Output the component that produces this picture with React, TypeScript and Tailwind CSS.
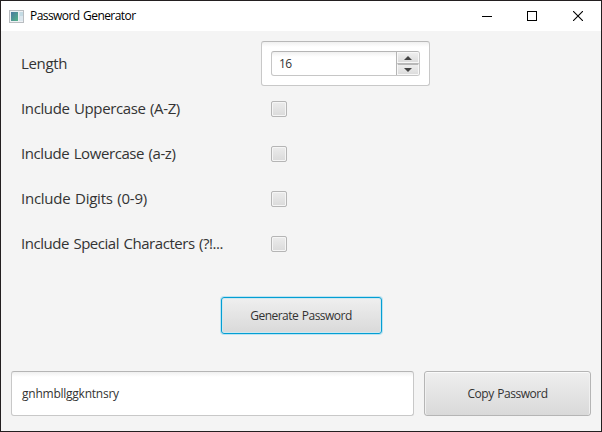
import React from "react";

const options = [
  { label: "Include Uppercase (A-Z)", tracking: "tracking-[-0.38px]" },
  { label: "Include Lowercase (a-z)", tracking: "tracking-[-0.42px]" },
  { label: "Include Digits (0-9)", tracking: "tracking-[-0.25px]" },
  { label: "Include Special Characters (?!...", tracking: "tracking-[-0.46px]" },
];

function TitleBar() {
  return (
    <header className="flex h-[30px] shrink-0 items-center bg-white text-black">
      <svg className="ml-2 h-[13px] w-[15px]" viewBox="0 0 15 13" shapeRendering="crispEdges">
        <defs>
          <linearGradient id="pane" x1="0" y1="0" x2="1" y2="1">
            <stop offset="0" stopColor="#4a78a0" />
            <stop offset="1" stopColor="#55b387" />
          </linearGradient>
        </defs>
        <rect width="15" height="13" fill="#b9bdc1" />
        <rect x="1" y="1" width="13" height="11" fill="#eef1f4" />
        <rect x="2" y="2" width="7" height="9" fill="url(#pane)" />
        <rect x="10" y="2" width="1" height="9" fill="#dbe3ea" />
        <rect x="11" y="2" width="3" height="4" fill="#c4dbe4" />
        <rect x="11" y="6" width="3" height="5" fill="#dce7ee" />
      </svg>
      <h1 className="ml-[6px] whitespace-nowrap text-[12px] leading-[16px] tracking-[-0.57px] [word-spacing:1px]">Password Generator</h1>
      <div className="ml-auto flex h-full">
        <button aria-label="Minimize" className="flex w-[46px] items-center justify-center">
          <svg width="10" height="10" shapeRendering="crispEdges"><path d="M0 5h10v1H0z" /></svg>
        </button>
        <button aria-label="Maximize" className="flex w-[45px] items-center justify-center pr-px">
          <svg width="10" height="10"><rect x=".5" y=".5" width="9" height="9" fill="none" stroke="black" /></svg>
        </button>
        <button aria-label="Close" className="flex w-[46px] items-center justify-center">
          <svg width="10" height="10"><path d="M0 0l10 10M10 0L0 10" stroke="black" strokeWidth="1.1" /></svg>
        </button>
      </div>
    </header>
  );
}

export default function App() {
  return (
    <div className="flex h-[432px] w-[602px] flex-col overflow-hidden border border-[#231f20] bg-[#f4f4f4] font-['Open_Sans','Noto_Sans',sans-serif] text-[#333]">
      <TitleBar />
      <main className="flex flex-1 flex-col px-[10px] pt-[10px]">
        <section className="flex h-[45px] items-center pl-[10px]">
          <label className="w-[240px] pb-[2px] text-[15px] leading-[20px] tracking-[-0.35px]">Length</label>
          <div className="h-[45px] w-[169px] rounded-[3px] border border-[#c8c8c8] border-t-[#b8b8b8] bg-gradient-to-b from-[#f0f0f0] to-white to-[5px] p-[9px]">
            <div className="flex h-[25px] w-[149px] overflow-hidden rounded-[3px] border border-[#c6c6c6] border-t-[#b5b5b5] bg-gradient-to-b from-[#f0f0f0] to-white to-[5px]">
              <span className="flex-1 pl-[7px] text-[12px] leading-[24px] tracking-[-0.5px]">16</span>
              <div className="-mr-px flex w-[24px] shrink-0 flex-col border-x border-[#b5b5b5]">
                <button aria-label="Increase" className="flex h-[11px] items-center justify-center border border-[#f8f8f8] bg-gradient-to-b from-[#eeeeee] to-[#dddddd]">
                  <svg width="8" height="4"><path d="M4 0L8 4H0z" fill="#444" /></svg>
                </button>
                <button aria-label="Decrease" className="flex h-[12px] items-center justify-center border border-t-2 border-[#f8f8f8] border-t-[#b9b9b9] bg-gradient-to-b from-[#eeeeee] to-[#dddddd]">
                  <svg width="8" height="4"><path d="M0 0H8L4 4z" fill="#444" /></svg>
                </button>
              </div>
            </div>
          </div>
        </section>
        {options.map(({ label, tracking }) => (
          <label key={label} className="flex h-[45px] items-center pl-[10px]">
            <span className={"w-[250px] whitespace-nowrap pb-[2px] text-[15px] leading-[20px] [word-spacing:1px] " + tracking}>{label}</span>
            <span className="size-[16px] rounded-[2px] border border-[#b5b5b5] bg-gradient-to-b from-[#ececec] to-[#dadada] shadow-[inset_0_0_0_1px_#f5f5f5]" />
          </label>
        ))}
        <div className="flex justify-center pt-[31px]">
          <button className="h-[37px] w-[161px] rounded-[3px] border border-[#039ed3] bg-gradient-to-b from-[#efefef] to-[#d9d9d9] pt-px text-[12px] tracking-[-0.52px] [word-spacing:1px] shadow-[0_0_0_1px_#bce3f1,inset_0_0_0_1px_#cfe7ef]">
            Generate Password
          </button>
        </div>
        <div className="mt-[37px] flex gap-[10px]">
          <div className="flex h-[45px] w-[403px] items-center rounded-[3px] border border-[#c8c8c8] border-t-[#b5b5b5] bg-gradient-to-b from-[#f0f0f0] to-white to-[5px] pl-[10px] text-[12px]">
            <span className="pt-px tracking-[-0.24px]">gnhmbllggkntnsry</span>
          </div>
          <button className="h-[45px] w-[167px] rounded-[3px] border border-[#b5b5b5] bg-gradient-to-b from-[#efefef] to-[#d9d9d9] pt-px text-[12px] tracking-[-0.49px] [word-spacing:1px] shadow-[inset_0_1px_0_#fafafa,inset_1px_0_0_#f0f0f0,inset_-1px_0_0_#f0f0f0]">
            Copy Password
          </button>
        </div>
      </main>
    </div>
  );
}
